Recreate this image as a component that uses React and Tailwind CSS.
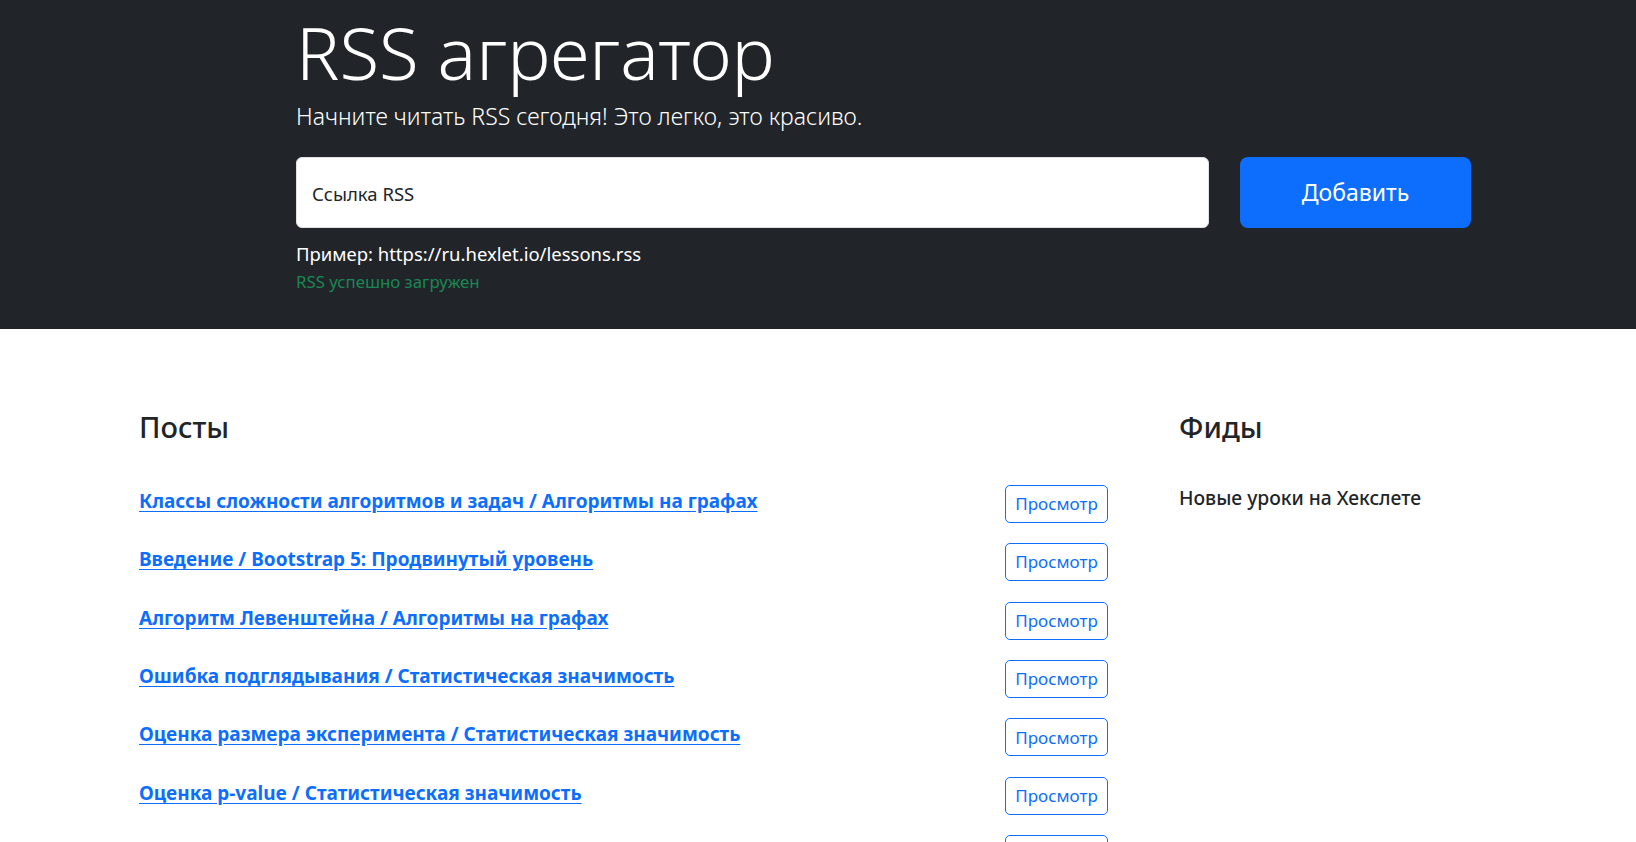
const posts = [
  "Классы сложности алгоритмов и задач / Алгоритмы на графах",
  "Введение / Bootstrap 5: Продвинутый уровень",
  "Алгоритм Левенштейна / Алгоритмы на графах",
  "Ошибка подглядывания / Статистическая значимость",
  "Оценка размера эксперимента / Статистическая значимость",
  "Оценка p-value / Статистическая значимость",
  "Статистическая значимость / Статистическая значимость",
];

const font = { fontFamily: '"Noto Sans", "Open Sans", sans-serif' };

export default function App() {
  return (
    <div className="min-h-screen bg-white text-[#212529]" style={font}>
      <section className="bg-[#212529] h-[329px]">
        <div className="ml-[296px] w-[1175px] pt-[12px]">
          <h1 className="text-[72.5px] leading-[1.1] font-light text-white">RSS агрегатор</h1>
          <p className="mt-[10px] text-[23px] leading-[1.3] font-light text-white">
            Начните читать RSS сегодня! Это легко, это красиво.
          </p>
          <form className="flex items-stretch gap-[31px] mt-[25px]">
            <div className="w-[913px] h-[71px] bg-white rounded-[6px] border border-[#dee2e6] flex items-center pl-[15px] pt-[3px]">
              <span className="text-[18.5px] text-[#212529]">Ссылка RSS</span>
            </div>
            <button
              type="button"
              className="w-[231px] h-[71px] rounded-[8px] bg-[#0d6efd] text-white text-[23px]">
              Добавить
            </button>
          </form>
          <p className="mt-[12px] text-[18.5px] leading-[1.5] text-white">Пример: https://ru.hexlet.io/lessons.rss</p>
          <p className="mt-[2px] text-[16.8px] leading-[1.5] text-[#198754]">RSS успешно загружен</p>
        </div>
      </section>

      <section className="flex pt-[81px]">
        <div className="ml-[123px] w-[1001px]">
          <h2 className="pl-[16px] text-[29px] leading-[1.2] font-medium">Посты</h2>
          <ul className="mt-[30px]">
            {posts.map((title) => (
              <li key={title} className="h-[58.4px] flex justify-between items-start px-[16px] pt-[10px]">
                <a href="#" className="mt-[2px] text-[19px] leading-[1.5] font-bold text-[#0d6efd] underline underline-offset-[3px]">
                  {title}
                </a>
                <button
                  type="button"
                  className="w-[103px] h-[38px] rounded-[5px] border border-[#0d6efd] text-[#0d6efd] text-[17px]">
                  Просмотр
                </button>
              </li>
            ))}
          </ul>
        </div>
        <div className="ml-[55px] w-[320px]">
          <h2 className="text-[29px] leading-[1.2] font-medium">Фиды</h2>
          <ul className="mt-[39px]">
            <li className="text-[19.3px] leading-[1.5] font-medium">Новые уроки на Хекслете</li>
          </ul>
        </div>
      </section>
    </div>
  );
}
